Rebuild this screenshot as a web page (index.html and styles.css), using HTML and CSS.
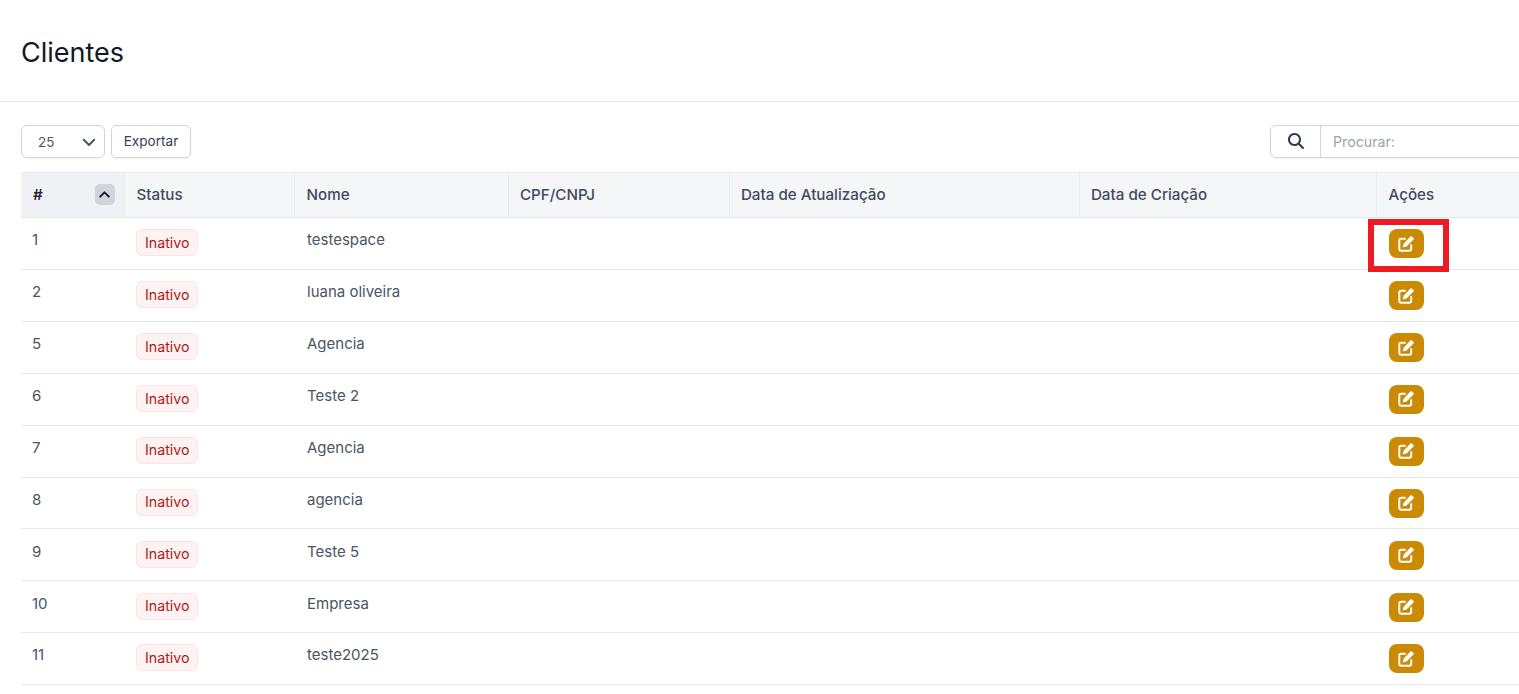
FILE: index.html
```html
<!DOCTYPE html>
<html lang="pt-BR">
<head>
<meta charset="utf-8">
<title>Clientes</title>
<link rel="stylesheet" href="styles.css">
</head>
<body>
<header class="page-header"><h1 class="page-title">Clientes</h1></header>
<main class="content">
  <div class="toolbar">
    <div class="toolbar-left">
      <div class="select-box"><span>25</span>
        <svg class="chevron" viewBox="0 0 16 16" width="16" height="16"><path d="M2.800 5.800 8 11l5.200-5.200" fill="none" stroke="#4b5563" stroke-width="2" stroke-linecap="round" stroke-linejoin="round"/></svg>
      </div>
      <button class="export-btn">Exportar</button>
    </div>
    <div class="search">
      <span class="search-icon"><svg viewBox="0 0 512 512" width="16" height="16"><path fill="#2b3a4e" d="M416 208c0 45.900-14.900 88.300-40 122.700L502.600 457.400c12.500 12.500 12.500 32.800 0 45.300s-32.800 12.500-45.300 0L330.700 376c-34.400 25.200-76.800 40-122.700 40C93.100 416 0 322.900 0 208S93.100 0 208 0S416 93.100 416 208zM208 352a144 144 0 1 0 0-288 144 144 0 1 0 0 288z"/></svg></span>
      <span class="search-placeholder">Procurar:</span>
    </div>
  </div>
  <table class="data-table">
    <colgroup><col class="c-id"><col class="c-status"><col class="c-name"><col class="c-doc"><col class="c-upd"><col class="c-created"><col class="c-act"></colgroup>
    <thead>
      <tr>
        <th class="sorted"><div class="th-sort"><span class="hash">#</span><span class="sort-btn"><svg viewBox="0 0 12 12" width="13" height="13"><path d="M2 8 6 4l4 4" fill="none" stroke="#111827" stroke-width="1.800" stroke-linecap="round" stroke-linejoin="round"/></svg></span></div></th>
        <th>Status</th><th>Nome</th><th>CPF/CNPJ</th><th>Data de Atualização</th><th>Data de Criação</th><th>Ações</th>
      </tr>
    </thead>
    <tbody>
      <tr><td class="id">1</td><td><span class="badge">Inativo</span></td><td class="name">testespace</td><td></td><td></td><td></td><td><span class="action-wrap"><button class="edit-btn" aria-label="Editar"><svg class="edit-icon" viewBox="0 0 16 16"><use href="#edit"/></svg></button><span class="highlight"></span></span></td></tr>
      <tr><td class="id">2</td><td><span class="badge">Inativo</span></td><td class="name">luana oliveira</td><td></td><td></td><td></td><td><button class="edit-btn" aria-label="Editar"><svg class="edit-icon" viewBox="0 0 16 16"><use href="#edit"/></svg></button></td></tr>
      <tr><td class="id">5</td><td><span class="badge">Inativo</span></td><td class="name">Agencia</td><td></td><td></td><td></td><td><button class="edit-btn" aria-label="Editar"><svg class="edit-icon" viewBox="0 0 16 16"><use href="#edit"/></svg></button></td></tr>
      <tr><td class="id">6</td><td><span class="badge">Inativo</span></td><td class="name">Teste 2</td><td></td><td></td><td></td><td><button class="edit-btn" aria-label="Editar"><svg class="edit-icon" viewBox="0 0 16 16"><use href="#edit"/></svg></button></td></tr>
      <tr><td class="id">7</td><td><span class="badge">Inativo</span></td><td class="name">Agencia</td><td></td><td></td><td></td><td><button class="edit-btn" aria-label="Editar"><svg class="edit-icon" viewBox="0 0 16 16"><use href="#edit"/></svg></button></td></tr>
      <tr><td class="id">8</td><td><span class="badge">Inativo</span></td><td class="name">agencia</td><td></td><td></td><td></td><td><button class="edit-btn" aria-label="Editar"><svg class="edit-icon" viewBox="0 0 16 16"><use href="#edit"/></svg></button></td></tr>
      <tr><td class="id">9</td><td><span class="badge">Inativo</span></td><td class="name">Teste 5</td><td></td><td></td><td></td><td><button class="edit-btn" aria-label="Editar"><svg class="edit-icon" viewBox="0 0 16 16"><use href="#edit"/></svg></button></td></tr>
      <tr><td class="id">10</td><td><span class="badge">Inativo</span></td><td class="name">Empresa</td><td></td><td></td><td></td><td><button class="edit-btn" aria-label="Editar"><svg class="edit-icon" viewBox="0 0 16 16"><use href="#edit"/></svg></button></td></tr>
      <tr><td class="id">11</td><td><span class="badge">Inativo</span></td><td class="name">teste2025</td><td></td><td></td><td></td><td><button class="edit-btn" aria-label="Editar"><svg class="edit-icon" viewBox="0 0 16 16"><use href="#edit"/></svg></button></td></tr>
    </tbody>
  </table>
</main>
<svg class="sprite" width="0" height="0" aria-hidden="true"><symbol id="edit" viewBox="0 0 16 16"><path d="M7 2.800H3.300A2 2 0 0 0 1.300 4.800v7.900a2 2 0 0 0 2 2h7.900a2 2 0 0 0 2-2V9" fill="none" stroke="#fff" stroke-width="2" stroke-linecap="round"/><path d="M12.400.5a1.100 1.100 0 0 1 1.500 0l1.600 1.600a1.100 1.100 0 0 1 0 1.500L8.500 10.600 4.700 11.500l.9-3.800z" fill="#fff"/></symbol></svg>
</body>
</html>
```
FILE: styles.css
```css
* { box-sizing: border-box; }
html, body { margin: 0; padding: 0; height: 100%; overflow: hidden; background: #fff; }
body { font-family: Inter, "Liberation Sans", sans-serif; color: #4b5563; font-size: 14px; }
.sprite { position: absolute; }
.page-header { height: 102px; border-bottom: 1px solid #e5e7eb; padding: 37px 21px 0; }
.page-title { margin: 0; font-size: 27px; line-height: 32px; font-weight: 400; color: #111827; }
.content { padding: 23px 0 0 21px; width: 1560px; }
.toolbar { display: flex; justify-content: space-between; height: 33px; margin-bottom: 14px; }
.toolbar-left { display: flex; gap: 6px; }
.select-box { width: 84px; height: 33px; border: 1px solid #d1d5db; border-radius: 6px; display: flex; align-items: center; justify-content: space-between; padding: 0 7px 0 16px; font-size: 13.4px; color: #4b5563; box-shadow: 0 1px 2px rgba(0,0,0,.05); }
.export-btn { width: 80px; height: 33px; border: 1px solid #d1d5db; border-radius: 5px; background: #fff; font: 13.6px Inter, "Liberation Sans", sans-serif; color: #374151; padding: 0 0 2px; box-shadow: 0 1px 2px rgba(0,0,0,.05); }
.search { width: 290px; height: 33px; border: 1px solid #d1d5db; border-radius: 6px; display: flex; align-items: center; box-shadow: 0 1px 2px rgba(0,0,0,.05); }
.search-icon { width: 50px; height: 100%; border-right: 1px solid #d1d5db; display: flex; align-items: center; justify-content: center; padding-bottom: 2px; }
.search-placeholder { padding-left: 12px; font-size: 14.2px; color: #9ca3af; }
.data-table { border-collapse: collapse; table-layout: fixed; width: 1539px; }
.c-id { width: 103px; } .c-status { width: 170px; } .c-name { width: 214px; } .c-doc { width: 221px; }
.c-upd { width: 350px; } .c-created { width: 297px; } .c-act { width: 184px; }
th { height: 45px; background: #f5f6f8; border-top: 1px solid #e9ebef; border-bottom: 1px solid #e5e7eb; border-right: 1px solid #e9ebef; padding: 0 11px 2px 12px; text-align: left; font-size: 15.2px; font-weight: 500; color: #3f4a5c; }
th:nth-child(4), th:nth-child(5), th:nth-child(6) { padding-left: 11.4px; }
th.sorted { background: #f0f1f4; padding: 0 9px 1px 11px; }
th:last-child { border-right: 0; }
.th-sort { display: flex; justify-content: space-between; align-items: center; }
.hash { color: #1f2937; font-weight: 600; padding-left: 1px; }
.sort-btn { width: 20px; height: 21px; background: #d1d5db; border-radius: 5px; display: flex; align-items: center; justify-content: center; }
td { height: 51.91px; border-bottom: 1px solid #e5e7eb; padding: 0 11px; font-size: 15px; color: #4b5563; vertical-align: top; }
.id, .name { padding-top: 13.2px; line-height: 17px; }
.name { padding-left: 13px; }
td:nth-child(2), td:last-child { padding-top: 11.2px; padding-left: 12px; }
td:last-child { padding-left: 13px; }
.badge { display: inline-block; height: 27px; padding: .64px 8px 0; line-height: 24px; border: 1px solid #fee2e2; border-radius: 6px; background: #fef2f2; color: #a91b1b; font-size: 14.2px; font-weight: 400; }
.action-wrap { position: relative; display: inline-block; }
.edit-btn { display: flex; align-items: center; justify-content: center; width: 35px; height: 29px; padding: 0 2px 0 0; border: 0; border-radius: 8px; background: #cb8a03; }
.edit-icon { width: 16px; height: 16px; display: block; }
.highlight { position: absolute; left: -21px; top: -10px; width: 81px; height: 53px; border: 6px solid #ed1c24; pointer-events: none; }
```
